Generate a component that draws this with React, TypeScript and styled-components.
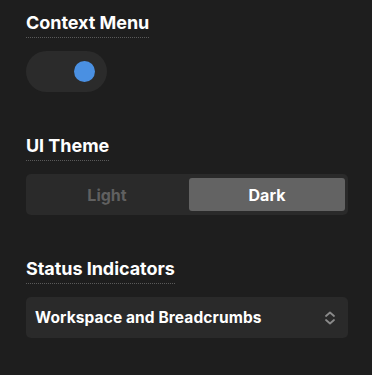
import React, { useState } from "react";
import styled, { createGlobalStyle } from "styled-components";

const Global = createGlobalStyle`
  html, body { margin: 0; padding: 0; background: #1e1e1e; }
  body { font-family: Inter, "Noto Sans", sans-serif; -webkit-font-smoothing: antialiased; }
`;

const Page = styled.div`
  width: 372px;
  height: 375px;
  box-sizing: border-box;
  padding: 11px 24px 0 26px;
  display: flex;
  flex-direction: column;
  background: #1e1e1e;
`;

const Section = styled.section`
  display: flex;
  flex-direction: column;
  align-items: flex-start;
  margin-bottom: 42px;
`;

const Title = styled.h2`
  margin: 0;
  font-size: 18px;
  line-height: 23px;
  font-weight: 700;
  color: #ffffff;
  letter-spacing: -0.05px;
  padding-bottom: 3px;
  border-bottom: 1px dotted #5a5a5a;
`;

const ToggleTrack = styled.button<{ $on: boolean }>`
  margin-top: 13px;
  width: 81px;
  height: 41px;
  border-radius: 21px;
  border: none;
  background: #2b2b2b;
  padding: 0 12px;
  display: flex;
  align-items: center;
  justify-content: ${(p) => (p.$on ? "flex-end" : "flex-start")};
  cursor: pointer;
`;

const Knob = styled.span`
  width: 21px;
  height: 21px;
  border-radius: 50%;
  background: #4a90e2;
`;

const Segmented = styled.div`
  margin-top: 13px;
  width: 322px;
  height: 41px;
  box-sizing: border-box;
  padding: 4px 3px;
  border-radius: 5px;
  background: #2a2a2a;
  display: grid;
  grid-template-columns: 1fr 1fr;
  gap: 4px;
`;

const Segment = styled.button<{ $active: boolean }>`
  border: none;
  border-radius: 3px;
  background: ${(p) => (p.$active ? "#636363" : "transparent")};
  color: ${(p) => (p.$active ? "#ffffff" : "#606060")};
  font-family: Inter, "Noto Sans", sans-serif;
  font-size: 16px;
  font-weight: 700;
  cursor: pointer;
  padding: 0;
`;

const Select = styled.div`
  margin-top: 13px;
  width: 322px;
  height: 41px;
  box-sizing: border-box;
  padding: 0 12px 0 9px;
  border-radius: 5px;
  background: #2a2a2a;
  display: flex;
  align-items: center;
  justify-content: space-between;
  color: #ffffff;
  font-size: 15.5px;
  font-weight: 700;
  letter-spacing: 0.1px;
`;

const Chevrons = styled.svg`
  width: 12px;
  height: 14px;
`;

export default function App() {
  const [on, setOn] = useState(true);
  const [theme, setTheme] = useState<"light" | "dark">("dark");
  return (
    <>
      <Global />
      <Page>
        <Section>
          <Title>Context Menu</Title>
          <ToggleTrack $on={on} onClick={() => setOn(!on)}>
            <Knob />
          </ToggleTrack>
        </Section>
        <Section>
          <Title>UI Theme</Title>
          <Segmented>
            <Segment $active={theme === "light"} onClick={() => setTheme("light")}>Light</Segment>
            <Segment $active={theme === "dark"} onClick={() => setTheme("dark")}>Dark</Segment>
          </Segmented>
        </Section>
        <Section>
          <Title>Status Indicators</Title>
          <Select>
            <span>Workspace and Breadcrumbs</span>
            <Chevrons viewBox="0 0 12 14" fill="none" stroke="#8a8a8a" strokeWidth="1.8" strokeLinecap="round" strokeLinejoin="round">
              <path d="M2 5 L6 1.5 L10 5" />
              <path d="M2 9 L6 12.5 L10 9" />
            </Chevrons>
          </Select>
        </Section>
      </Page>
    </>
  );
}
